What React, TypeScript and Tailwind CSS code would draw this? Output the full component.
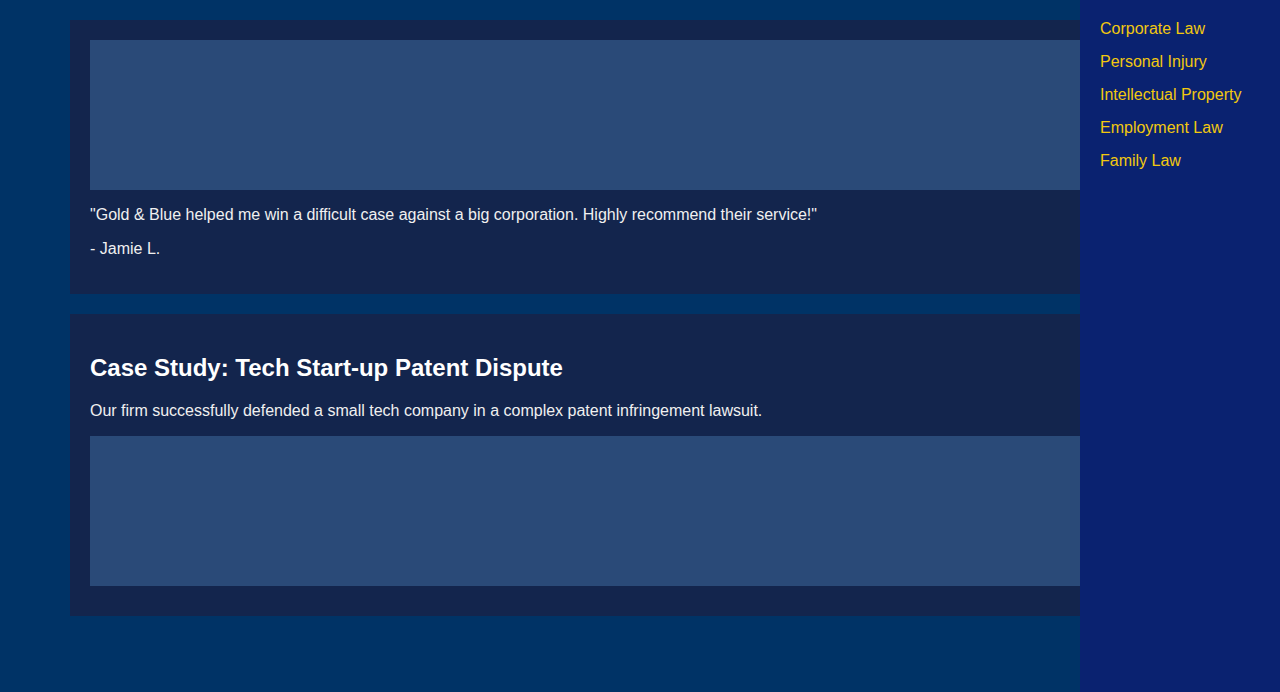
export default function App() {
  const areas = ["Corporate Law", "Personal Injury", "Intellectual Property", "Employment Law", "Family Law"];
  return (
    <div className="relative min-h-[692px] bg-[#003366] font-['Liberation_Sans',Arial,sans-serif] text-[16px] text-[#f0f0f0]">
      <main className="flex flex-col gap-5 pl-[70px] pt-5">
        <section className="bg-[#13254d] p-5">
          <div className="h-[150px] bg-[#2a4a78]" />
          <p className="mt-4 leading-[18px]">
            "Gold &amp; Blue helped me win a difficult case against a big corporation. Highly recommend their service!"
          </p>
          <p className="mb-4 mt-4 leading-[18px]">- Jamie L.</p>
        </section>
        <section className="bg-[#13254d] p-5 pb-[30px]">
          <h2 className="mt-5 text-[24px] font-bold leading-[28px] text-white">Case Study: Tech Start-up Patent Dispute</h2>
          <p className="my-5 leading-[18px]">
            Our firm successfully defended a small tech company in a complex patent infringement lawsuit.
          </p>
          <div className="-mt-1 h-[150px] bg-[#2a4a78]" />
        </section>
      </main>
      <aside className="fixed right-0 top-0 h-full w-[200px] bg-[#0a2270] px-5 pt-5">
        <ul className="flex flex-col gap-[15px]">
          {areas.map((a) => (
            <li key={a} className="leading-[18px]">
              <a href="#" className="text-[#f2c80f]">
                {a}
              </a>
            </li>
          ))}
        </ul>
      </aside>
    </div>
  );
}
